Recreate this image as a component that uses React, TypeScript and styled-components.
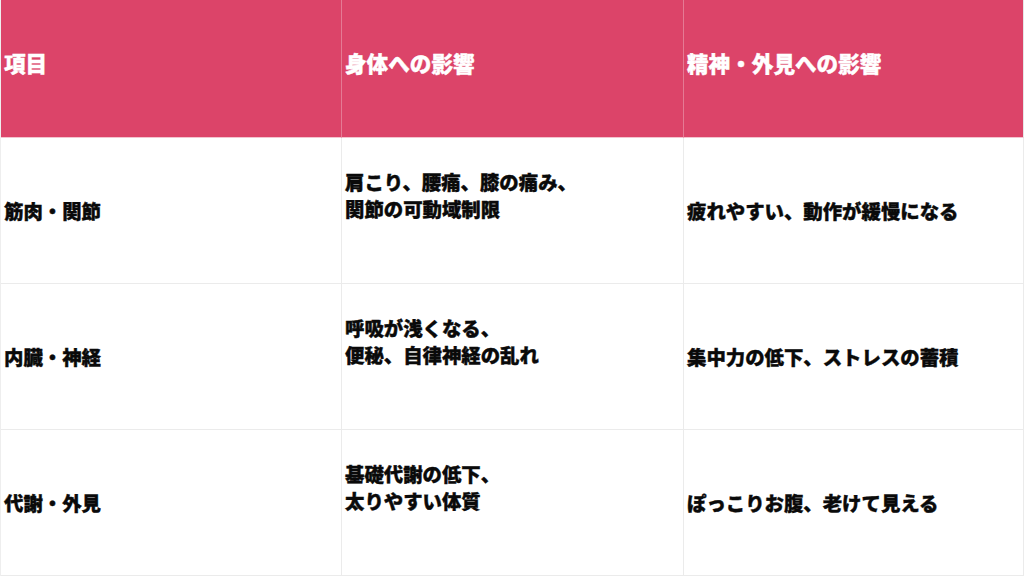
import React from "react";
import styled, { createGlobalStyle } from "styled-components";

const Global = createGlobalStyle`
  html, body { margin: 0; padding: 0; background: #ffffff; }
  body { font-family: "Noto Sans CJK JP", "Noto Sans", sans-serif; }
`;

const Table = styled.div`
  display: grid;
  grid-template-columns: 341px 342px 340px;
  grid-template-rows: 138px 146px 146px 146px;
  width: 1024px;
  height: 576px;
  box-sizing: border-box;
  border-left: 1px solid #eeeeee;
`;

const HeadCell = styled.div<{ $last?: boolean }>`
  background: #dc4469;
  color: #ffffff;
  font-weight: 900;
  font-size: 21.6px;
  -webkit-text-stroke: 0.4px #ffffff;
  display: flex;
  align-items: center;
  padding: 0 0 12px 3px;
  box-sizing: border-box;
  border-right: 1px solid ${(p) => (p.$last ? "#e6e6e6" : "#e57a94")};
  border-bottom: 1px solid #f3c4cf;
`;

const Cell = styled.div`
  background: #ffffff;
  color: #0a0a0a;
  font-weight: 900;
  font-size: 19.4px;
  line-height: 27px;
  -webkit-text-stroke: 0.4px #0a0a0a;
  display: flex;
  align-items: center;
  padding: 0 0 0 3px;
  box-sizing: border-box;
  border-right: 1px solid #ebebeb;
  border-bottom: 1px solid #ebebeb;
`;

const MultiLine = styled.span`
  display: block;
  margin-bottom: 32px;
`;

const rows: [string, string[], string][] = [
  ["筋肉・関節", ["肩こり、腰痛、膝の痛み、", "関節の可動域制限"], "疲れやすい、動作が緩慢になる"],
  ["内臓・神経", ["呼吸が浅くなる、", "便秘、自律神経の乱れ"], "集中力の低下、ストレスの蓄積"],
  ["代謝・外見", ["基礎代謝の低下、", "太りやすい体質"], "ぽっこりお腹、老けて見える"],
];

export default function App() {
  return (
    <>
      <Global />
      <Table>
        <HeadCell>項目</HeadCell>
        <HeadCell>身体への影響</HeadCell>
        <HeadCell $last>精神・外見への影響</HeadCell>
        {rows.map(([a, b, c]) => (
          <React.Fragment key={a}>
            <Cell>{a}</Cell>
            <Cell>
              <MultiLine>
                {b[0]}
                <br />
                {b[1]}
              </MultiLine>
            </Cell>
            <Cell>{c}</Cell>
          </React.Fragment>
        ))}
      </Table>
    </>
  );
}
